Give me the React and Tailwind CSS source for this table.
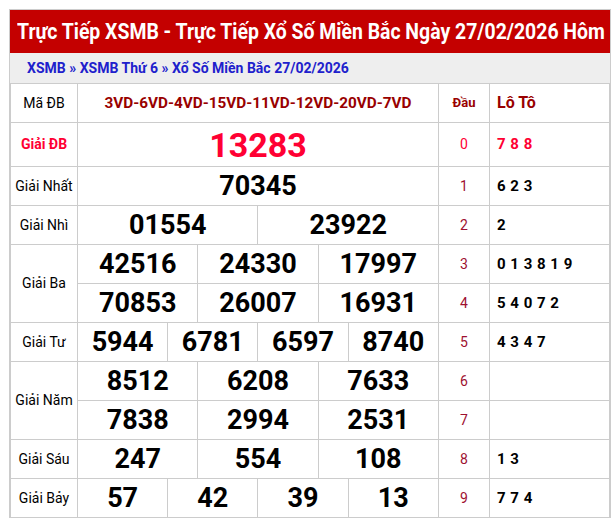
const rows = [
  { label: 'Giải Nhất', nums: ['70345'], span: 12, dau: '1', loto: '6 2 3' },
  { label: 'Giải Nhì', nums: ['01554', '23922'], span: 6, dau: '2', loto: '2' },
];

function Num({ value, span }) {
  return (
    <td colSpan={span} className="border border-[#cccccc] text-center text-[27px] font-bold text-black leading-none">
      {value}
    </td>
  );
}

function Label({ children, rowSpan = 1 }) {
  return (
    <td rowSpan={rowSpan} className="border border-[#cccccc] text-center text-[14px] text-black">
      {children}
    </td>
  );
}

function Dau({ children, red }) {
  return (
    <td className={`border border-[#cccccc] text-center text-[14px] ${red ? 'text-[#ff0033]' : 'text-[#9e1030]'}`}>
      {children}
    </td>
  );
}

function Loto({ children, red }) {
  return (
    <td className={`border border-[#cccccc] pl-[7px] text-[15px] font-bold tracking-[0.5px] whitespace-pre ${red ? 'text-[#ff0033]' : 'text-black'}`}>
      {children}
    </td>
  );
}

export default function App() {
  return (
    <div className="min-h-[524px] bg-white font-['Roboto',sans-serif]">
      <div className="ml-[9px] mt-[9px] w-[602px] border border-[#cccccc] border-b-0">
        {/* title wraps so the tail ("Nay") drops out of the fixed-height bar */}
        <div className="h-[43px] overflow-hidden bg-[#c40000] pl-[7px]">
          <h1 className="w-[680px] origin-left scale-x-[0.8825] text-[22px] leading-[43px] font-bold text-white">
            Trực Tiếp XSMB - Trực Tiếp Xổ Số Miền Bắc Ngày 27/02/2026 Hôm Nay
          </h1>
        </div>
        <div className="h-[30px] bg-[#eeeeee] pl-[17px] flex items-center text-[14px] font-bold text-[#2020cc]">
          XSMB » XSMB Thứ 6 » Xổ Số Miền Bắc 27/02/2026
        </div>
        <table className="w-full table-fixed border-collapse">
          <colgroup>
            <col className="w-[67px]" />
            <col /><col /><col /><col /><col /><col />
            <col /><col /><col /><col /><col /><col />
            <col className="w-[51px]" />
            <col className="w-[120px]" />
          </colgroup>
          <tbody>
            <tr className="h-[39px]">
              <Label>Mã ĐB</Label>
              <td colSpan={12} className="border border-[#cccccc] text-center text-[15.3px] font-bold text-[#990000]">
                3VD-6VD-4VD-15VD-11VD-12VD-20VD-7VD
              </td>
              <td className="border border-[#cccccc] text-center text-[13px] font-bold text-[#990000]">Đầu</td>
              <td className="border border-[#cccccc] pl-[7px] text-[16px] font-bold text-[#990000]">Lô Tô</td>
            </tr>
            <tr className="h-[44px]">
              <td className="border border-[#cccccc] text-center text-[14px] font-bold text-[#ff0033]">Giải ĐB</td>
              <td colSpan={12} className="border border-[#cccccc] text-center text-[34px] font-bold text-[#ff0033] leading-none">
                13283
              </td>
              <Dau red>0</Dau>
              <Loto red>7 8 8</Loto>
            </tr>
            {rows.map((r) => (
              <tr key={r.label} className="h-[39px]">
                <Label>{r.label}</Label>
                {r.nums.map((n, i) => (
                  <Num key={i} value={n} span={r.span} />
                ))}
                <Dau>{r.dau}</Dau>
                <Loto>{r.loto}</Loto>
              </tr>
            ))}
            <tr className="h-[39px]">
              <Label rowSpan={2}>Giải Ba</Label>
              <Num value="42516" span={4} />
              <Num value="24330" span={4} />
              <Num value="17997" span={4} />
              <Dau>3</Dau>
              <Loto>0 1 3 8 1 9</Loto>
            </tr>
            <tr className="h-[39px]">
              <Num value="70853" span={4} />
              <Num value="26007" span={4} />
              <Num value="16931" span={4} />
              <Dau>4</Dau>
              <Loto>5 4 0 7 2</Loto>
            </tr>
            <tr className="h-[39px]">
              <Label>Giải Tư</Label>
              <Num value="5944" span={3} />
              <Num value="6781" span={3} />
              <Num value="6597" span={3} />
              <Num value="8740" span={3} />
              <Dau>5</Dau>
              <Loto>4 3 4 7</Loto>
            </tr>
            <tr className="h-[39px]">
              <Label rowSpan={2}>Giải Năm</Label>
              <Num value="8512" span={4} />
              <Num value="6208" span={4} />
              <Num value="7633" span={4} />
              <Dau>6</Dau>
              <Loto></Loto>
            </tr>
            <tr className="h-[39px]">
              <Num value="7838" span={4} />
              <Num value="2994" span={4} />
              <Num value="2531" span={4} />
              <Dau>7</Dau>
              <Loto></Loto>
            </tr>
            <tr className="h-[39px]">
              <Label>Giải Sáu</Label>
              <Num value="247" span={4} />
              <Num value="554" span={4} />
              <Num value="108" span={4} />
              <Dau>8</Dau>
              <Loto>1 3</Loto>
            </tr>
            <tr className="h-[39px]">
              <Label>Giải Bảy</Label>
              <Num value="57" span={3} />
              <Num value="42" span={3} />
              <Num value="39" span={3} />
              <Num value="13" span={3} />
              <Dau>9</Dau>
              <Loto>7 7 4</Loto>
            </tr>
          </tbody>
        </table>
      </div>
    </div>
  );
}
